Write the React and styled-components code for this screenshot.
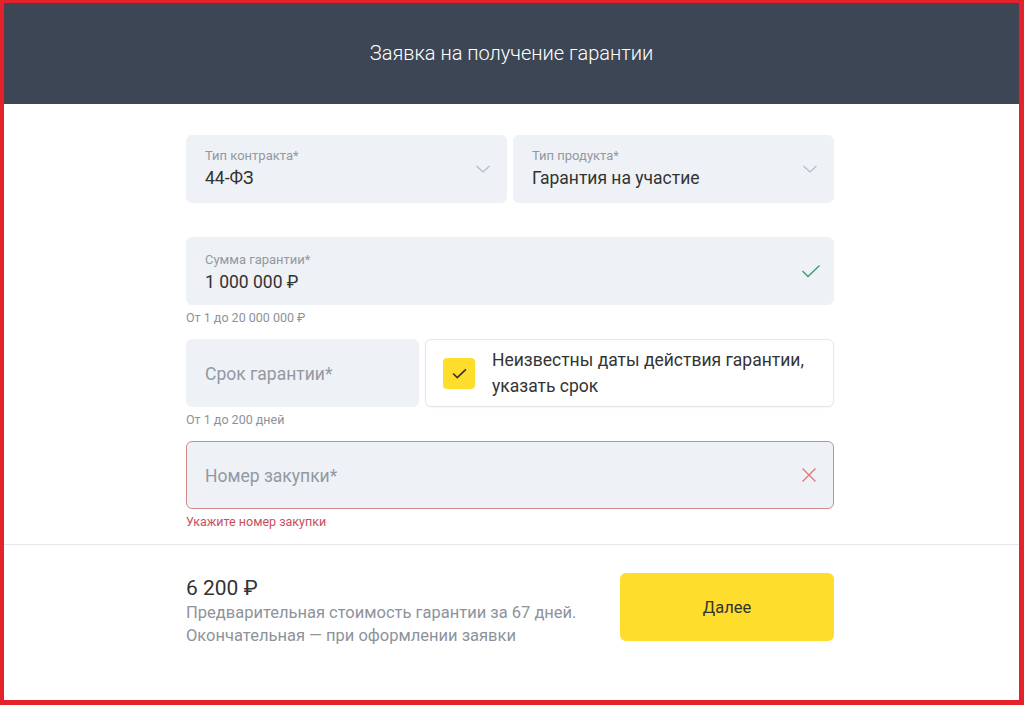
import React from "react";
import styled, { createGlobalStyle } from "styled-components";

const GlobalStyle = createGlobalStyle`
  html, body { margin: 0; padding: 0; background: #fff; }
  body { font-family: Roboto, "Liberation Sans", Arial, sans-serif; color: #333; }
`;

//styled comp
const Frame = styled.div`
  box-sizing: border-box;
  width: 1024px;
  height: 705px;
  border-style: solid;
  border-color: #e4222b;
  border-width: 3px 5px 5px 4px;
  display: flex;
  flex-direction: column;
  overflow: hidden;
`;

const Header = styled.header`
  height: 101px;
  flex-shrink: 0;
  background: #3d4655;
  display: flex;
  align-items: center;
  justify-content: center;
  color: #fff;
  font-size: 20px;
  font-weight: 300;
  padding-bottom: 2px;
  box-sizing: border-box;
`;

const Form = styled.div`
  width: 648px;
  margin: 0 auto;
  padding: 31px 3px 0 0;
  display: flex;
  flex-direction: column;
`;

const Row = styled.div`
  display: grid;
  grid-template-columns: ${(p) => p.$cols || "1fr"};
  gap: 6px;
`;

const Field = styled.div`
  box-sizing: border-box;
  height: 68px;
  border-radius: 6px;
  background: #eef1f5;
  border: 1px solid ${(p) => (p.$error ? "#d58a8a" : "#eef1f5")};
  padding: 0 18px;
  display: flex;
  align-items: center;
  justify-content: space-between;
`;

const FieldText = styled.div`
  display: flex;
  flex-direction: column;
  padding-top: ${(p) => p.$pt || 2}px;
`;

const Label = styled.span`
  font-size: 13px;
  line-height: 16px;
  color: #9299a2;
`;

const Value = styled.span`
  font-size: 17.5px;
  line-height: 28px;
  color: #333;
`;

const Placeholder = styled.span`
  font-size: 17.5px;
  color: #9299a2;
  padding-top: 2px;
`;

const Icon = styled.span`
  display: flex;
  margin-right: ${(p) => p.$mr || 0}px;
`;

const Helper = styled.div`
  height: 34px;
  box-sizing: border-box;
  padding-top: 6px;
  font-size: 12.5px;
  line-height: 14px;
  color: ${(p) => (p.$error ? "#c9505a" : "#8d939b")};
`;

const CheckCard = styled.label`
  box-sizing: border-box;
  height: 68px;
  border-radius: 6px;
  background: #fff;
  border: 1px solid #e3e6ea;
  box-shadow: 0 1px 2px rgba(0, 0, 0, 0.04);
  padding: 0 18px 0 17px;
  display: flex;
  align-items: center;
  gap: 17px;
`;

const CheckBox = styled.span`
  width: 32px;
  height: 31px;
  flex-shrink: 0;
  border-radius: 4px;
  background: #ffdd2d;
  display: flex;
  align-items: center;
  justify-content: center;
`;

const CheckText = styled.span`
  font-size: 17.5px;
  line-height: 26px;
  color: #333;
`;

const Divider = styled.div`
  height: 1px;
  background: #e6e8eb;
  margin-top: 1px;
`;

const Footer = styled.div`
  width: 648px;
  margin: 0 auto;
  padding: 28px 3px 0 0;
  display: flex;
  justify-content: space-between;
  align-items: flex-start;
`;

const Price = styled.div`
  display: flex;
  flex-direction: column;
  padding-top: 2px;
`;

const PriceValue = styled.span`
  font-size: 21px;
  line-height: 26px;
  color: #333;
`;

const PriceNote = styled.span`
  font-size: 16.5px;
  line-height: 23px;
  color: #8d939b;
`;

const Button = styled.button`
  width: 214px;
  height: 68px;
  border: none;
  border-radius: 6px;
  background: #ffdd2d;
  font-family: inherit;
  font-size: 16.5px;
  color: #333;
  cursor: pointer;
`;

const Chevron = () => (
  <svg width="16" height="10" viewBox="0 0 16 10" fill="none">
    <path d="M1.5 2 L8 8 L14.5 2" stroke="#b6bcc4" strokeWidth="1.2" />
  </svg>
);

const Tick = ({ color = "#3d9a6c", w = 20, h = 14, sw = 1.3 }) => (
  <svg width={w} height={h} viewBox="0 0 20 14" fill="none">
    <path d="M1.5 7 L7 12.5 L18.5 1.5" stroke={color} strokeWidth={sw} />
  </svg>
);

const Cross = () => (
  <svg width="16" height="16" viewBox="0 0 16 16" fill="none">
    <path d="M1.5 1.5 L14.5 14.5 M14.5 1.5 L1.5 14.5" stroke="#e07a7a" strokeWidth="1.4" />
  </svg>
);

const App = () => {
  return (
    <Frame>
      <GlobalStyle />
      <Header>Заявка на получение гарантии</Header>
      <Form>
        <Row $cols="321px 1fr">
          <Field>
            <FieldText>
              <Label>Тип контракта*</Label>
              <Value>44-ФЗ</Value>
            </FieldText>
            <Icon $mr={-3}>
              <Chevron />
            </Icon>
          </Field>
          <Field>
            <FieldText>
              <Label>Тип продукта*</Label>
              <Value>Гарантия на участие</Value>
            </FieldText>
            <Icon $mr={-3}>
              <Chevron />
            </Icon>
          </Field>
        </Row>
        <Helper />
        <Field>
          <FieldText $pt={6}>
            <Label>Сумма гарантии*</Label>
            <Value>1 000 000 ₽</Value>
          </FieldText>
          <Icon $mr={-6}>
            <Tick />
          </Icon>
        </Field>
        <Helper>От 1 до 20 000 000 ₽</Helper>
        <Row $cols="233px 1fr">
          <Field>
            <Placeholder>Срок гарантии*</Placeholder>
          </Field>
          <CheckCard>
            <CheckBox>
              <Tick color="#333" w={15} h={11} sw={2.2} />
            </CheckBox>
            <CheckText>
              Неизвестны даты действия гарантии,
              <br />
              указать срок
            </CheckText>
          </CheckCard>
        </Row>
        <Helper>От 1 до 200 дней</Helper>
        <Field $error>
          <Placeholder>Номер закупки*</Placeholder>
          <Icon $mr={-2}>
            <Cross />
          </Icon>
        </Field>
        <Helper $error>Укажите номер закупки</Helper>
      </Form>
      <Divider />
      <Footer>
        <Price>
          <PriceValue>6 200 ₽</PriceValue>
          <PriceNote>Предварительная стоимость гарантии за 67 дней.</PriceNote>
          <PriceNote>Окончательная — при оформлении заявки</PriceNote>
        </Price>
        <Button>Далее</Button>
      </Footer>
    </Frame>
  );
};

export default App;
